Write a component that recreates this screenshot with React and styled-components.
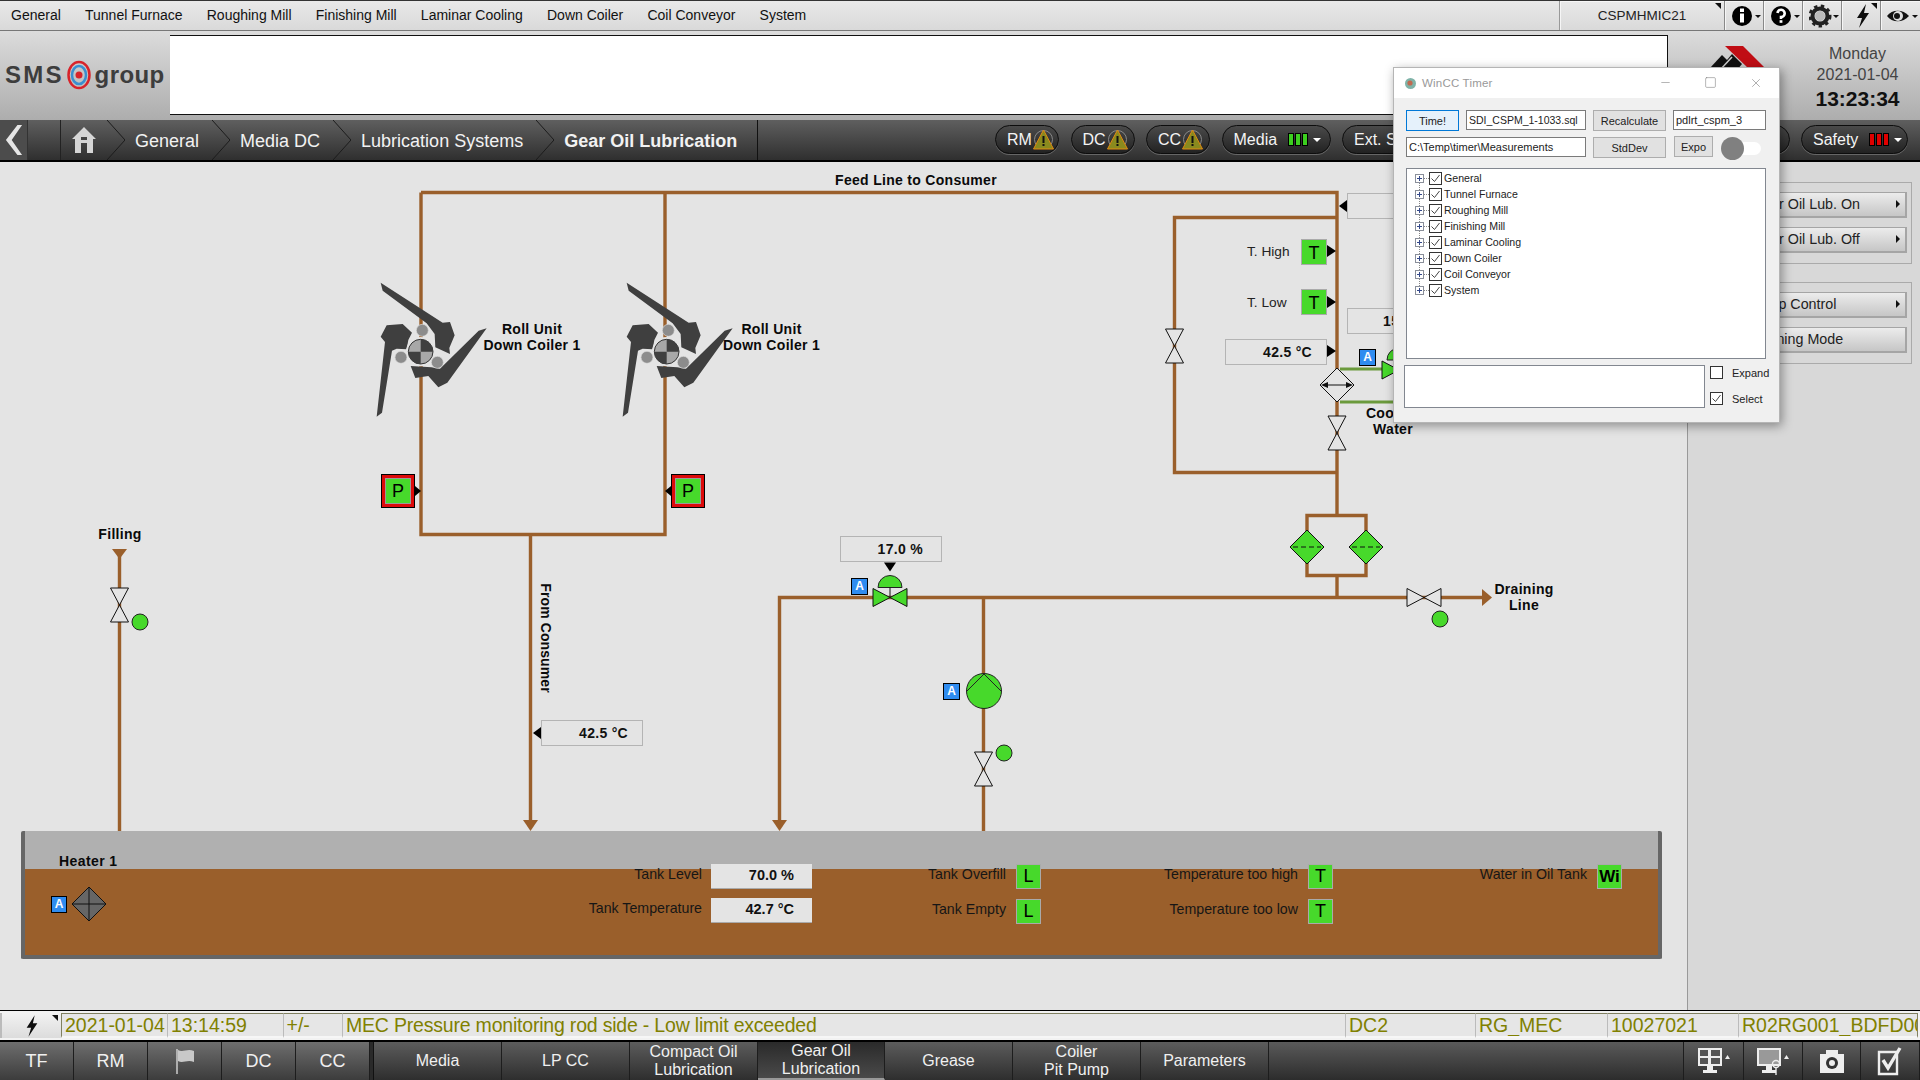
import styled, { createGlobalStyle } from 'styled-components';
import { Minus, Square, X } from 'lucide-react';

const PIPE = '#9a5f2b';
const GREEN = '#47d92b';
const BG = '#e4e4e4';

const GlobalStyle = createGlobalStyle`
  html, body { margin: 0; padding: 0; background: ${BG}; }
  body { font-family: "Liberation Sans", Arial, sans-serif; }
  * { box-sizing: border-box; }
`;

const Page = styled.div`
  position: relative;
  display: flex;
  flex-direction: column;
  width: 1920px;
  height: 1080px;
  overflow: hidden;
`;

/* top menu */
const TopMenu = styled.div`
  display: flex;
  height: 31px;
  background: linear-gradient(#e9e9e9, #d9d9d9);
  border-bottom: 1px solid #777;
  border-top: 1px solid #333;
`;
const MenuItems = styled.nav`
  display: flex;
  align-items: center;
  gap: 24.2px;
  flex: 1;
  padding: 0 0 1px 11px;
  font-size: 14px;
  color: #111;
`;
const HostBox = styled.div`
  position: relative;
  width: 166px;
  display: flex;
  align-items: center;
  justify-content: center;
  font-size: 13.5px;
  color: #222;
  border-left: 1px solid #999;
  border-right: 1px solid #888;
  box-shadow: inset 1px 1px 0 #f6f6f6;
`;
const ToolCell = styled.div`
  position: relative;
  width: 39px;
  display: flex;
  align-items: center;
  justify-content: center;
  padding-left: 3px;
  border-right: 1px solid #888;
  box-shadow: inset 1px 1px 0 #f6f6f6;
  &:last-child { border-right: 0; }
`;
const CornerMark = styled.span`
  position: absolute;
  top: 2px;
  right: 3px;
  border-top: 6px solid #111;
  border-left: 6px solid transparent;
`;

/* header */
const Header = styled.header`
  display: flex;
  height: 89px;
  background: linear-gradient(#dcdcdc, #adadad);
`;
const LogoBox = styled.div`
  width: 170px;
  display: flex;
  align-items: center;
  gap: 1px;
  padding: 0 0 1px 5px;
  font-size: 24px;
  font-weight: bold;
  color: #3d3d3d;
`;
const LogoWord = styled.span`
  letter-spacing: ${p => p.$spacing || 0}px;
`;
const Banner = styled.div`
  width: 1498px;
  margin: 4px 0 5px;
  background: #fff;
  border: 1.5px solid #111;
  border-left: 0;
`;
const BrandMark = styled.svg`
  width: 60px;
  height: 30px;
  margin: 15px 0 0 40px;
`;
const DateBox = styled.div`
  flex: 1;
  display: flex;
  flex-direction: column;
  align-items: center;
  padding: 12px 0 0 27px;
  font-size: 16px;
  line-height: 21px;
  color: #444;
`;
const Clock = styled.div`
  margin-top: 3px;
  font-size: 21px;
  font-weight: bold;
  color: #111;
`;

/* breadcrumb bar */
const NavBar = styled.div`
  display: flex;
  height: 42px;
  align-items: stretch;
  background: linear-gradient(#5f5f5f, #2f2f2f);
  border-bottom: 2px solid #000;
  color: #f2f2f2;
  font-size: 18px;
`;
const BackButton = styled.div`
  width: 28px;
  display: flex;
  align-items: center;
  justify-content: center;
  background: #4c4c4c;
  border-right: 1px solid #333;
`;
const NavSpacer = styled.div`
  width: 33px;
  border-right: 1px solid #222;
`;
const HomeCell = styled.div`
  width: 46px;
  display: flex;
  align-items: center;
  justify-content: center;
`;
const Crumb = styled.div`
  display: flex;
  align-items: center;
  gap: 10px;
  padding-right: 13px;
  font-weight: ${p => (p.$current ? 'bold' : 'normal')};
`;
const CrumbName = styled.span`
  padding-top: 2px;
`;
const CrumbEdge = styled.svg`
  width: 18px;
  height: 40px;
`;
const CrumbEnd = styled.div`
  width: 8px;
  border-right: 1px solid #111;
`;
const Pills = styled.div`
  display: flex;
  align-items: center;
  gap: 11.5px;
  margin-left: auto;
  padding-right: 12px;
  margin-top: -1px;
`;
const Pill = styled.div`
  display: flex;
  align-items: center;
  width: ${p => p.$w}px;
  height: 29px;
  padding-left: 11px;
  border-radius: 15px;
  border: 1px solid #0d0d0d;
  background: linear-gradient(#4a4a4a, #222);
  box-shadow: 0 1px 0 #666;
  font-size: 16px;
  color: #f4f4f4;
`;
const PillWarn = styled.svg`
  width: 21px;
  height: 21px;
  margin-left: 1px;
`;
const LedBars = styled.span`
  display: flex;
  gap: 1px;
  margin: 0 5px 0 11px;
`;
const Led = styled.span`
  width: 6px;
  height: 13px;
  border: 1px solid #000;
  background: ${p => p.$color};
`;
const Caret = styled.span`
  border-top: 4px solid #fff;
  border-left: 4px solid transparent;
  border-right: 4px solid transparent;
`;

/* main area */
const Main = styled.main`
  display: flex;
  height: 848px;
`;
const Canvas = styled.section`
  position: relative;
  width: 1687px;
  padding: 669px 25px 0 21px;
  background: ${BG};
`;
const Pipes = styled.svg`
  position: absolute;
  left: 0;
  top: 0;
  width: 1687px;
  height: 848px;
`;
const Label = styled.div`
  position: absolute;
  left: ${p => p.$x}px;
  top: ${p => p.$y - 162}px;
  transform: translate(-50%, -50%);
  font-size: 14px;
  font-weight: bold;
  line-height: 16px;
  letter-spacing: 0.3px;
  text-align: center;
  white-space: nowrap;
  color: #0a0a0a;
`;
const VerticalLabel = styled(Label)`
  writing-mode: vertical-rl;
  letter-spacing: 0.1px;
`;
const PlainLabel = styled(Label)`
  font-weight: normal;
  letter-spacing: 0;
  font-size: 13.7px;
  transform: translate(0, -50%);
  color: #222;
`;
const ValueBox = styled.div`
  position: absolute;
  left: ${p => p.$x}px;
  top: ${p => p.$y - 162}px;
  width: 102px;
  height: 26px;
  padding-right: ${p => p.$pad || 14}px;
  border: 1px solid #b4b4b4;
  background: ${BG};
  font-size: 14px;
  font-weight: bold;
  letter-spacing: 0.3px;
  line-height: 24px;
  text-align: right;
  color: #111;
`;
const AutoBadge = styled.div`
  position: absolute;
  left: ${p => p.$x}px;
  top: ${p => p.$y - 162}px;
  width: 17px;
  height: 17px;
  border: 1px solid #000;
  background: #2f8cf0;
  color: #fff;
  font-size: 12px;
  font-weight: bold;
  line-height: 15px;
  text-align: center;
`;
const SignalBox = styled.div`
  position: absolute;
  left: ${p => p.$x}px;
  top: ${p => p.$y - 162}px;
  width: 26px;
  height: 26px;
  border: 1px solid #aaa;
  background: ${GREEN};
  font-size: 18px;
  line-height: 26px;
  text-align: center;
  color: #000;
`;
const PressureBox = styled.div`
  position: absolute;
  left: ${p => p.$x}px;
  top: ${p => p.$y - 162}px;
  width: 34px;
  height: 34px;
  border: 4px solid #dd0a0a;
  outline: 1px solid #000;
  outline-offset: -1px;
  box-shadow: inset 0 0 0 1px #999;
  background: ${GREEN};
  font-size: 18px;
  line-height: 26px;
  text-align: center;
  color: #000;
`;

/* tank */
const Tank = styled.div`
  position: relative;
  height: 128px;
  border: 4px solid #666;
  border-top: 0;
  border-radius: 2px;
  background: linear-gradient(#b0b0b0 0, #b0b0b0 38px, ${PIPE} 38px);
`;
const TankReadouts = styled.div`
  position: absolute;
  inset: 0;
  display: grid;
  grid-template-columns: 787px 229px 292px 289px;
  padding-top: 32px;
`;
const TankColumn = styled.div`
  display: grid;
  grid-auto-rows: 26px;
  row-gap: ${p => p.$gap || 8}px;
  justify-items: end;
  font-size: 14.2px;
  color: #161616;
`;
const TankRow = styled.div`
  display: flex;
  align-items: center;
  gap: 9px;
`;
const TankRowLabel = styled.span`
  margin-top: -4px;
`;
const TankValue = styled.div`
  width: 101px;
  height: 25px;
  padding-right: 18px;
  background: ${BG};
  border-bottom: 1px solid #aaa;
  font-size: 14.5px;
  font-weight: bold;
  line-height: 23px;
  text-align: right;
  color: #111;
`;
const TankSignal = styled.div`
  width: 25px;
  height: 25px;
  margin-left: 1px;
  border: 1px solid #aaa;
  background: ${GREEN};
  font-size: ${p => (p.$bold ? 17 : 18)}px;
  font-weight: ${p => (p.$bold ? 'bold' : 'normal')};
  line-height: 23px;
  text-align: center;
  color: #000;
`;
const Heater = styled.div`
  position: absolute;
  left: 26px;
  top: 22px;
  display: flex;
  flex-direction: column;
  align-items: flex-start;
  gap: 20px;
  font-size: 14px;
  font-weight: bold;
  color: #0a0a0a;
`;
const HeaterTitle = styled.div`
  margin-left: 8px;
  line-height: 16px;
  letter-spacing: 0.4px;
`;
const HeaterUnit = styled.div`
  display: flex;
  align-items: center;
  gap: 5px;
  margin-top: -3px;
`;
const HeaterBadge = styled.div`
  width: 16px;
  height: 17px;
  border: 1px solid #000;
  background: #2f8cf0;
  color: #fff;
  font-size: 12px;
  line-height: 15px;
  text-align: center;
`;
const HeaterIcon = styled.svg`
  width: 36px;
  height: 36px;
  margin-left: -1px;
`;

/* right panel */
const SidePanel = styled.aside`
  flex: 1;
  display: flex;
  flex-direction: column;
  gap: 18px;
  padding: 20px 8px 0 8px;
  background: #d8d8d8;
  border-left: 1px solid #999;
`;
const SideGroup = styled.div`
  display: flex;
  flex-direction: column;
  gap: 9px;
  padding: 9px 4px 10px;
  border: 1px solid #aaa;
`;
const SideButton = styled.div`
  position: relative;
  height: 26px;
  padding-left: ${p => p.$pad || 50}px;
  background: linear-gradient(#ececec, #c6c6c6);
  border: 1px solid #a5a5a5;
  border-right-width: 2px;
  border-bottom-width: 2px;
  font-size: 14.3px;
  line-height: 23px;
  color: #222;
  ${p => p.$arrow && `
    &::after {
      content: '';
      position: absolute;
      right: 5px;
      top: 7px;
      border-left: 4px solid #111;
      border-top: 4px solid transparent;
      border-bottom: 4px solid transparent;
    }
  `}
`;

/* status line */
const StatusBar = styled.div`
  display: grid;
  grid-template-columns: 61px 107px 115.5px 59.5px 1003px 130px 132px 131px 181px;
  height: 30px;
  padding: 2px 0;
  background: #f2f2f2;
  border-top: 1px solid #000;
`;
const BoltCell = styled.div`
  position: relative;
  display: flex;
  align-items: center;
  justify-content: center;
  background: linear-gradient(#f2f2f2, #dcdcdc);
  border-left: 2px solid #bbb;
`;
const StatusCell = styled.div`
  padding-left: 3px;
  overflow: hidden;
  white-space: nowrap;
  background: #e6e6e6;
  border-top: 1px solid #808060;
  border-bottom: 2px solid #f6f6f6;
  border-right: 1px solid #bbb;
  font-size: 19.5px;
  letter-spacing: ${p => (p.$tight ? '-0.2px' : '0')};
  line-height: 22px;
  color: #808000;
  &:nth-child(2) { border-left: 1px solid #808060; }
  &:last-child { border-right: 1px solid #808060; margin-right: 2px; }
`;

/* bottom tabs */
const BottomBar = styled.footer`
  display: flex;
  height: 40px;
  background: linear-gradient(#5a5a5a, #2c2c2c);
  border-top: 2px solid #000;
`;
const Tab = styled.div`
  display: flex;
  align-items: center;
  justify-content: center;
  width: ${p => p.$w}px;
  border-right: 1px solid #1d1d1d;
  background: ${p => {
    if (p.$active) return 'linear-gradient(#2a2a2a, #4a4a4a)';
    if (p.$light) return 'linear-gradient(#6e6e6e, #3c3c3c)';
    return 'linear-gradient(#5c5c5c, #2e2e2e)';
  }};
  border-bottom: ${p => (p.$active ? '2px solid #999' : '0')};
  font-size: ${p => (p.$light ? 18 : 16)}px;
  line-height: 18px;
  text-align: center;
  color: #f0f0f0;
`;
const TabGap = styled.div`
  width: 4px;
  background: #2a2a2a;
  border-right: 1px solid #111;
`;
const TabFill = styled.div`
  flex: 1;
  border-right: 1px solid #1d1d1d;
`;

/* WinCC Timer window */
const TimerWindow = styled.div`
  position: absolute;
  left: 1393px;
  top: 67px;
  width: 387px;
  height: 356px;
  background: #f0f0f0;
  border: 1px solid #b5b5b5;
  box-shadow: 2px 3px 10px rgba(0, 0, 0, 0.38);
  font-size: 11px;
  color: #222;
`;
const TitleBar = styled.div`
  display: flex;
  align-items: center;
  height: 30px;
  padding: 0 16px 0 10px;
  background: #fff;
  font-size: 11.5px;
  color: #999;
`;
const TitleText = styled.span`
  margin-left: 5px;
  flex: 1;
  letter-spacing: 0.2px;
`;
const TitleControls = styled.div`
  display: flex;
  gap: 32px;
  color: #777;
`;
const WindowBody = styled.div`
  padding: 12px 13px 0 12px;
`;
const ControlGrid = styled.div`
  display: grid;
  grid-template-columns: 53px 120px 73px 93px;
  grid-template-rows: 21px 21px;
  column-gap: 7px;
  row-gap: 6px;
`;
const WinButton = styled.div`
  display: flex;
  align-items: center;
  justify-content: center;
  background: ${p => (p.$focus ? '#e5f1fb' : '#e1e1e1')};
  border: 1px solid ${p => (p.$focus ? '#0078d7' : '#adadad')};
  width: ${p => (p.$w ? `${p.$w}px` : 'auto')};
  height: ${p => (p.$w ? '21px' : 'auto')};
`;
const WinInput = styled.div`
  grid-column: ${p => (p.$span ? `span ${p.$span}` : 'auto')};
  padding-left: 2px;
  height: 20px;
  background: #fff;
  border: 1px solid #7a7a7a;
  font-size: ${p => p.$size || 11}px;
  line-height: 18px;
  white-space: nowrap;
  overflow: hidden;
`;
const ExpoCell = styled.div`
  display: flex;
  align-items: center;
  gap: 8px;
  margin-top: -1px;
  padding-left: 1px;
  height: 21px;
`;
const Toggle = styled.div`
  position: relative;
  width: 40px;
  height: 13px;
  margin-top: 4px;
  border-radius: 7px;
  background: #fff;
  &::before {
    content: '';
    position: absolute;
    left: 0;
    top: -5px;
    width: 23px;
    height: 23px;
    border-radius: 50%;
    background: #808080;
  }
`;
const Tree = styled.div`
  position: relative;
  height: 191px;
  margin-top: 10px;
  padding: 1px 0 0 8px;
  background: #fff;
  border: 1px solid #828790;
  &::before {
    content: '';
    position: absolute;
    left: 12px;
    top: 9px;
    height: 112px;
    border-left: 1px dotted #888;
  }
`;
const TreeRow = styled.div`
  position: relative;
  display: flex;
  align-items: center;
  height: 16px;
  font-size: 10.6px;
`;
const ExpandBox = styled.span`
  position: relative;
  z-index: 1;
  width: 9px;
  height: 9px;
  border: 1px solid #8a8f9a;
  background: #fff;
  &::before, &::after {
    content: '';
    position: absolute;
    background: #33488a;
  }
  &::before { left: 1px; right: 1px; top: 3px; height: 1px; }
  &::after { top: 1px; bottom: 1px; left: 3px; width: 1px; }
`;
const TreeDots = styled.span`
  width: 5px;
  border-top: 1px dotted #888;
`;
const CheckBox = styled.span`
  flex: none;
  display: flex;
  align-items: center;
  justify-content: center;
  width: 13px;
  height: 13px;
  margin-right: 2px;
  background: #fff;
  border: 1px solid #333;
`;
const CheckMark = styled.svg`
  width: 11px;
  height: 11px;
`;
const LowerRow = styled.div`
  display: flex;
  gap: 5px;
  margin: 6px 0 0 -2px;
`;
const MessageBox = styled.div`
  width: 301px;
  height: 43px;
  flex: none;
  background: #fff;
  border: 1px solid #828790;
`;
const OptionList = styled.div`
  display: flex;
  flex-direction: column;
  gap: 13px;
  padding: 1px 0 0 0;
`;
const Option = styled.div`
  display: flex;
  align-items: center;
  gap: 7px;
  height: 13px;
`;

/* drawing helpers */
const tick = (
  <CheckMark viewBox="0 0 11 11">
    <path d="M1.5 5.5 L4.5 8.5 L9.5 2" fill="none" stroke="#444" strokeWidth="1" />
  </CheckMark>
);

const ValveV = ({ x, y }) => (
  <polygon
    points={`${x - 9},${y - 17} ${x + 9},${y - 17} ${x - 9},${y + 17} ${x + 9},${y + 17}`}
    fill={BG}
    stroke="#111"
    strokeWidth="1"
  />
);
const ValveH = ({ x, y, fill = BG }) => (
  <polygon
    points={`${x - 17},${y - 9} ${x + 17},${y + 9} ${x + 17},${y - 9} ${x - 17},${y + 9}`}
    fill={fill}
    stroke="#111"
    strokeWidth="1"
  />
);
const ControlValve = ({ x, y }) => (
  <g>
    <path d={`M${x - 12} ${y - 10} A12 12 0 0 1 ${x + 12} ${y - 10} Z`} fill={GREEN} stroke="#222" />
    <line x1={x} y1={y - 10} x2={x} y2={y} stroke="#111" />
    <ValveH x={x} y={y} fill={GREEN} />
    <polygon points={`${x - 6},${y - 35} ${x + 6},${y - 35} ${x},${y - 26}`} fill="#000" />
  </g>
);
const Dot = ({ x, y }) => <circle cx={x} cy={y} r="8" fill={GREEN} stroke="#222" />;
const FilterUnit = ({ x, y }) => (
  <g>
    <polygon points={`${x - 17},${y} ${x},${y - 17} ${x + 17},${y} ${x},${y + 17}`} fill={GREEN} stroke="#111" />
    <line x1={x - 14} y1={y} x2={x + 14} y2={y} stroke="#111" strokeDasharray="5 3" />
  </g>
);
const Coiler = ({ x }) => (
  <g transform={`translate(${x} 260) scale(0.3333)`}>
    <polygon fill="#3f3f3f" points="62,68 248,188 270,186 284,226 268,264 270,282 226,262 224,222 200,190 68,92" />
    <polygon fill="#3f3f3f" points="50,470 66,458 96,272 110,266 140,268 145,240 156,218 128,192 80,196 62,230 75,246" />
    <polygon fill="#3f3f3f" points="380,205 356,212 240,326 214,322 152,318 166,354 205,348 235,382 262,368" />
    <circle cx="182" cy="275" r="44" fill="#e4e4e4" />
    <circle cx="182" cy="275" r="37" fill="#a8a8a8" stroke="#333" strokeWidth="3" />
    <path d="M182 275 H145 A37 37 0 0 0 182 312 Z" fill="#3f3f3f" />
    <path d="M182 275 H219 A37 37 0 0 0 182 238 Z" fill="#3f3f3f" />
    <circle cx="187" cy="211" r="18" fill="#8c8c8c" stroke="#ddd" strokeWidth="2" />
    <circle cx="123" cy="292" r="18" fill="#8c8c8c" stroke="#ddd" strokeWidth="2" />
    <circle cx="232" cy="307" r="18" fill="#8c8c8c" stroke="#ddd" strokeWidth="2" />
  </g>
);

const PIPE_RUNS = [
  '421,192.5 1337,192.5 1337,515.5',
  '1337,575.5 1337,597.5',
  '421,192.5 421,534.5 665,534.5 665,192.5',
  '530.5,534.5 530.5,822',
  '1337,217.5 1174.5,217.5 1174.5,472.5 1337,472.5',
  '779.5,825 779.5,597.5 1484,597.5',
  '983.5,597.5 983.5,831',
  '119.5,556 119.5,831',
  '1307,547 1307,515.5 1366,515.5 1366,575.5 1307,575.5 1307,547',
];

const Diagram = () => (
  <Pipes viewBox="0 162 1687 848">
    {PIPE_RUNS.map(points => (
      <polyline key={points} points={points} fill="none" stroke={PIPE} strokeWidth="3.4" />
    ))}
    <polygon points="523,820 538,820 530.5,831" fill={PIPE} />
    <polygon points="772,820 787,820 779.5,831" fill={PIPE} />
    <polygon points="112,549 127,549 119.5,559" fill={PIPE} />
    <polygon points="1482,589 1492,597.5 1482,606" fill={PIPE} />

    <path d="M1340 369 H1400 M1340 402 H1420" stroke="#6b9a3c" strokeWidth="3" fill="none" />
    <polygon points="1337,368 1354,385 1337,402 1320,385" fill={BG} stroke="#111" />
    <path d="M1325 385 H1349" stroke="#111" />
    <polygon points="1321,385 1328,382 1328,388" fill="#111" />
    <polygon points="1353,385 1346,382 1346,388" fill="#111" />

    <polygon points="1327,245 1336,251 1327,257" fill="#000" />
    <polygon points="1327,296 1336,302 1327,308" fill="#000" />
    <polygon points="1327,345 1336,351 1327,357" fill="#000" />
    <polygon points="1347,200 1339,206 1347,212" fill="#000" />
    <polygon points="415,486 421,491 415,496" fill="#000" />
    <polygon points="671,486 665,491 671,496" fill="#000" />
    <polygon points="541,727 533,733 541,739" fill="#000" />

    <ValveV x={1174.5} y={346} />
    <ValveV x={1337} y={433} />
    <ValveV x={119.5} y={605} />
    <ValveV x={983.5} y={769} />
    <ValveH x={1424} y={597.5} />
    <ControlValve x={890} y={597.5} />
    <ControlValve x={1399} y={370} />

    <FilterUnit x={1307} y={547} />
    <FilterUnit x={1366} y={547} />

    <Dot x={140} y={622} />
    <Dot x={1440} y={619} />
    <Dot x={1004} y={753} />

    <circle cx="984" cy="691" r="17.5" fill={GREEN} stroke="#222" />
    <path d="M967 691 L984 674 L1001 691" fill="none" stroke="#222" />

    <Coiler x={360} />
    <Coiler x={606} />
  </Pipes>
);

const BoltIcon = ({ size = 18 }) => (
  <svg width={size} height={size + 6} viewBox="0 0 18 24">
    <polygon points="12,0 3,14 8,14 5,24 15,9 10,9" fill="#0d0d0d" />
  </svg>
);

const WarnIcon = () => (
  <PillWarn viewBox="0 0 21 21">
    <circle cx="10.5" cy="10.5" r="9" fill="none" stroke="#888" />
    <polygon points="10.5,1 20.5,20 0.5,20" fill="#8a8a1e" stroke="#e08a12" strokeWidth="1" />
    <rect x="9.5" y="7" width="2" height="7" fill="#111" />
    <rect x="9.5" y="15" width="2" height="2" fill="#111" />
  </PillWarn>
);

const crumbEdge = (
  <CrumbEdge viewBox="0 0 18 40">
    <path d="M0 0 L18 20 L0 40" fill="none" stroke="#1c1c1c" />
  </CrumbEdge>
);

const MENU = ['General', 'Tunnel Furnace', 'Roughing Mill', 'Finishing Mill', 'Laminar Cooling', 'Down Coiler', 'Coil Conveyor', 'System'];

const App = () => (
  <Page>
    <GlobalStyle />
    <TopMenu>
      <MenuItems>
        {MENU.map(item => <span key={item}>{item}</span>)}
      </MenuItems>
      <HostBox>CSPMHMIC21<CornerMark /></HostBox>
      <ToolCell>
        <svg width="30" height="24" viewBox="0 0 30 24">
          <circle cx="11" cy="12" r="10" fill="#000" />
          <rect x="9" y="9.5" width="4" height="9" fill="#fff" />
          <rect x="9" y="4.5" width="4" height="3.5" fill="#fff" />
          <polygon points="24,11 30,11 27,14" fill="#111" />
        </svg>
      </ToolCell>
      <ToolCell>
        <svg width="30" height="24" viewBox="0 0 30 24">
          <circle cx="11" cy="12" r="10" fill="#000" />
          <path d="M7.5 9 A3.6 3.6 0 1 1 11 13 V15" fill="none" stroke="#fff" strokeWidth="2.6" />
          <rect x="9.6" y="16.2" width="2.8" height="2.6" fill="#fff" />
          <polygon points="24,11 30,11 27,14" fill="#111" />
        </svg>
      </ToolCell>
      <ToolCell>
        <svg width="30" height="24" viewBox="0 0 30 24">
          <circle cx="11" cy="12" r="7.5" fill="none" stroke="#222" strokeWidth="4" />
          <circle cx="11" cy="12" r="10" fill="none" stroke="#222" strokeWidth="3" strokeDasharray="3.4 3.4" />
          <circle cx="11" cy="12" r="5" fill="#bbb" />
          <polygon points="24,11 30,11 27,14" fill="#111" />
        </svg>
      </ToolCell>
      <ToolCell>
        <BoltIcon />
        <CornerMark />
      </ToolCell>
      <ToolCell>
        <svg width="32" height="20" viewBox="0 0 32 20">
          <path d="M1 10 C6 3 17 3 23 10 C17 17 6 17 1 10 Z" fill="#111" />
          <circle cx="12" cy="10" r="5" fill="#ddd" />
          <circle cx="11" cy="10" r="3" fill="#111" />
          <polygon points="26,9 32,9 29,12" fill="#111" />
        </svg>
      </ToolCell>
    </TopMenu>

    <Header>
      <LogoBox>
        <LogoWord $spacing={2.2}>SMS</LogoWord>
        <svg width="29" height="30" viewBox="0 0 29 30">
          <ellipse cx="14" cy="15" rx="10.5" ry="13" fill="none" stroke="#d8232a" strokeWidth="2.5" />
          <ellipse cx="14" cy="15" rx="7" ry="9" fill="none" stroke="#3a8fd0" strokeWidth="2.5" />
          <circle cx="14" cy="15" r="3.5" fill="#d8232a" />
        </svg>
        <LogoWord $spacing={0.4}>group</LogoWord>
      </LogoBox>
      <Banner />
      <BrandMark viewBox="0 0 60 30">
        <polygon points="17,0 35,0 57,22 40,22" fill="#c00d14" />
        <polygon points="2,22 14,9 20,15 8,28" fill="#111" />
        <polygon points="14,20 24,8 34,18 24,30" fill="#111" />
        <path d="M12 24 L24 11" stroke="#cfcfcf" strokeWidth="1.5" />
      </BrandMark>
      <DateBox>
        <div>Monday</div>
        <div>2021-01-04</div>
        <Clock>13:23:34</Clock>
      </DateBox>
    </Header>

    <NavBar>
      <BackButton>
        <svg width="18" height="30" viewBox="0 0 14 26">
          <polygon points="10,0 14,0 5,13 14,26 10,26 0,13" fill="#e6e6e6" />
        </svg>
      </BackButton>
      <NavSpacer />
      <HomeCell>
        <svg width="26" height="28" viewBox="0 0 26 28">
          <path d="M13 1 L25 13 L22 13 L22 27 L16 27 L16 17 L10 17 L10 27 L4 27 L4 13 L1 13 Z" fill="#d6d6d6" />
          <rect x="10" y="11" width="6" height="3" fill="#444" />
        </svg>
      </HomeCell>
      {['General', 'Media DC', 'Lubrication Systems'].map(name => (
        <Crumb key={name}>{crumbEdge}<CrumbName>{name}</CrumbName></Crumb>
      ))}
      <Crumb $current>{crumbEdge}<CrumbName>Gear Oil Lubrication</CrumbName></Crumb>
      <CrumbEnd />
      <Pills>
        <Pill $w={64}>RM<WarnIcon /></Pill>
        <Pill $w={64}>DC<WarnIcon /></Pill>
        <Pill $w={64}>CC<WarnIcon /></Pill>
        <Pill $w={109}>
          Media
          <LedBars>
            <Led $color="#3ccf1f" /><Led $color="#3ccf1f" /><Led $color="#3ccf1f" />
          </LedBars>
          <Caret />
        </Pill>
        <Pill $w={110}>Ext. Sys</Pill>
        <Pill $w={326} />
        <Pill $w={107}>
          Safety
          <LedBars>
            <Led $color="#e00000" /><Led $color="#e00000" /><Led $color="#e00000" />
          </LedBars>
          <Caret />
        </Pill>
      </Pills>
    </NavBar>

    <Main>
      <Canvas>
        <Diagram />
        <Label $x={916} $y={180}>Feed Line to Consumer</Label>
        <Label $x={532} $y={337}>Roll Unit<br />Down Coiler 1</Label>
        <Label $x={771.5} $y={337}>Roll Unit<br />Down Coiler 1</Label>
        <Label $x={120} $y={534}>Filling</Label>
        <VerticalLabel $x={546} $y={638}>From Consumer</VerticalLabel>
        <Label $x={1524} $y={597}>Draining<br />Line</Label>
        <Label $x={1393} $y={421}>Cooling<br />Water</Label>

        <PlainLabel $x={1247} $y={252}>T. High</PlainLabel>
        <PlainLabel $x={1247} $y={303}>T. Low</PlainLabel>
        <SignalBox $x={1301} $y={239}>T</SignalBox>
        <SignalBox $x={1301} $y={289}>T</SignalBox>
        <PressureBox $x={381} $y={474}>P</PressureBox>
        <PressureBox $x={671} $y={474}>P</PressureBox>

        <ValueBox $x={1347} $y={193} />
        <ValueBox $x={1347} $y={308} $pad={16}>15.0 °C</ValueBox>
        <ValueBox $x={1225} $y={339}>42.5 °C</ValueBox>
        <ValueBox $x={840} $y={536} $pad={18}>17.0 %</ValueBox>
        <ValueBox $x={541} $y={720}>42.5 °C</ValueBox>

        <AutoBadge $x={1359} $y={349}>A</AutoBadge>
        <AutoBadge $x={851} $y={578}>A</AutoBadge>
        <AutoBadge $x={943} $y={683}>A</AutoBadge>

        <Tank>
          <Heater>
            <HeaterTitle>Heater 1</HeaterTitle>
            <HeaterUnit>
              <HeaterBadge>A</HeaterBadge>
              <HeaterIcon viewBox="0 0 36 36">
                <polygon points="18,1 35,18 18,35 1,18" fill="#666" stroke="#111" />
                <path d="M1 18 H35 M18 1 V35" stroke="#111" />
              </HeaterIcon>
            </HeaterUnit>
          </Heater>
          <TankReadouts>
            <TankColumn>
              <TankRow><TankRowLabel>Tank Level</TankRowLabel><TankValue>70.0 %</TankValue></TankRow>
              <TankRow><TankRowLabel>Tank Temperature</TankRowLabel><TankValue>42.7 °C</TankValue></TankRow>
            </TankColumn>
            <TankColumn $gap={9}>
              <TankRow><TankRowLabel>Tank Overfill</TankRowLabel><TankSignal>L</TankSignal></TankRow>
              <TankRow><TankRowLabel>Tank Empty</TankRowLabel><TankSignal>L</TankSignal></TankRow>
            </TankColumn>
            <TankColumn $gap={9}>
              <TankRow><TankRowLabel>Temperature too high</TankRowLabel><TankSignal>T</TankSignal></TankRow>
              <TankRow><TankRowLabel>Temperature too low</TankRowLabel><TankSignal>T</TankSignal></TankRow>
            </TankColumn>
            <TankColumn>
              <TankRow><TankRowLabel>Water in Oil Tank</TankRowLabel><TankSignal $bold>Wi</TankSignal></TankRow>
            </TankColumn>
          </TankReadouts>
        </Tank>
      </Canvas>

      <SidePanel>
        <SideGroup>
          <SideButton $arrow>Gear Oil Lub. On</SideButton>
          <SideButton $arrow>Gear Oil Lub. Off</SideButton>
        </SideGroup>
        <SideGroup>
          <SideButton $arrow $pad={47}>Pump Control</SideButton>
          <SideButton $pad={45}>Cleaning Mode</SideButton>
        </SideGroup>
      </SidePanel>
    </Main>

    <StatusBar>
      <BoltCell><BoltIcon size={16} /><CornerMark /></BoltCell>
      <StatusCell>2021-01-04</StatusCell>
      <StatusCell>13:14:59</StatusCell>
      <StatusCell>+/-</StatusCell>
      <StatusCell $tight>MEC Pressure monitoring rod side - Low limit exceeded</StatusCell>
      <StatusCell>DC2</StatusCell>
      <StatusCell>RG_MEC</StatusCell>
      <StatusCell>10027021</StatusCell>
      <StatusCell>R02RG001_BDFD001</StatusCell>
    </StatusBar>

    <BottomBar>
      <Tab $w={74} $light>TF</Tab>
      <Tab $w={74} $light>RM</Tab>
      <Tab $w={74} $light>
        <svg width="20" height="26" viewBox="0 0 20 26">
          <path d="M2 1 V26" stroke="#ccc" strokeWidth="1.5" />
          <path d="M3 2 C8 5 12 0 19 3 V14 C12 11 8 16 3 13 Z" fill="#c8c8c8" />
        </svg>
      </Tab>
      <Tab $w={74} $light>DC</Tab>
      <Tab $w={74} $light>CC</Tab>
      <TabGap />
      <Tab $w={128}>Media</Tab>
      <Tab $w={128}>LP CC</Tab>
      <Tab $w={128}>Compact Oil<br />Lubrication</Tab>
      <Tab $w={127} $active>Gear Oil<br />Lubrication</Tab>
      <Tab $w={128}>Grease</Tab>
      <Tab $w={128}>Coiler<br />Pit Pump</Tab>
      <Tab $w={128}>Parameters</Tab>
      <TabFill />
      <Tab $w={60}>
        <svg width="34" height="30" viewBox="0 0 34 30">
          <rect x="1" y="2" width="24" height="18" fill="#eee" />
          <path d="M3 4 H11 V10 H3 Z M14 4 H23 V10 H14 Z M3 12 H11 V18 H3 Z M14 12 H23 V18 H14 Z" fill="#555" />
          <path d="M10 20 H16 V24 H20 V27 H6 V24 H10 Z" fill="#eee" />
          <polygon points="28,13 33,13 30.5,9" fill="#eee" />
        </svg>
      </Tab>
      <Tab $w={59}>
        <svg width="34" height="30" viewBox="0 0 34 30">
          <rect x="1" y="2" width="24" height="18" fill="#eee" />
          <rect x="3" y="4" width="20" height="14" fill="#999" />
          <path d="M10 20 H16 V24 H20 V27 H6 V24 H10 Z" fill="#eee" />
          <circle cx="20" cy="18" r="3.5" fill="none" stroke="#eee" strokeWidth="1.4" />
          <path d="M20 21 V29" stroke="#eee" strokeWidth="1.4" />
          <polygon points="28,13 33,13 30.5,9" fill="#eee" />
        </svg>
      </Tab>
      <Tab $w={58}>
        <svg width="26" height="28" viewBox="0 0 26 28">
          <path d="M1 7 H7 V3 H19 V7 H25 V26 H1 Z" fill="#eee" />
          <circle cx="13" cy="16" r="6" fill="#333" />
          <circle cx="13" cy="16" r="3" fill="#eee" />
        </svg>
      </Tab>
      <Tab $w={59}>
        <svg width="26" height="30" viewBox="0 0 26 30">
          <path d="M2 6 H20 V28 H2 Z" fill="none" stroke="#eee" strokeWidth="2.4" />
          <path d="M6 14 L11 22 L23 2" fill="none" stroke="#eee" strokeWidth="3.4" />
        </svg>
      </Tab>
    </BottomBar>

    <TimerWindow>
      <TitleBar>
        <svg width="13" height="13" viewBox="0 0 13 13">
          <circle cx="6.5" cy="6.5" r="5.5" fill="#7fb3a8" />
          <circle cx="6" cy="6" r="2.6" fill="#c06a50" />
        </svg>
        <TitleText>WinCC Timer</TitleText>
        <TitleControls>
          <Minus size={13} strokeWidth={1} />
          <Square size={13} strokeWidth={1} />
          <X size={14} strokeWidth={1} />
        </TitleControls>
      </TitleBar>
      <WindowBody>
        <ControlGrid>
          <WinButton $focus>Time!</WinButton>
          <WinInput $size={10.5}>SDI_CSPM_1-1033.sql</WinInput>
          <WinButton>Recalculate</WinButton>
          <WinInput>pdlrt_cspm_3</WinInput>
          <WinInput $span={2}>C:\Temp\timer\Measurements</WinInput>
          <WinButton>StdDev</WinButton>
          <ExpoCell>
            <WinButton $w={39}>Expo</WinButton>
            <Toggle />
          </ExpoCell>
        </ControlGrid>
        <Tree>
          {MENU.map(name => (
            <TreeRow key={name}>
              <ExpandBox />
              <TreeDots />
              <CheckBox>{tick}</CheckBox>
              {name}
            </TreeRow>
          ))}
        </Tree>
        <LowerRow>
          <MessageBox />
          <OptionList>
            <Option><CheckBox />Expand</Option>
            <Option><CheckBox>{tick}</CheckBox>Select</Option>
          </OptionList>
        </LowerRow>
      </WindowBody>
    </TimerWindow>
  </Page>
);

export default App;
